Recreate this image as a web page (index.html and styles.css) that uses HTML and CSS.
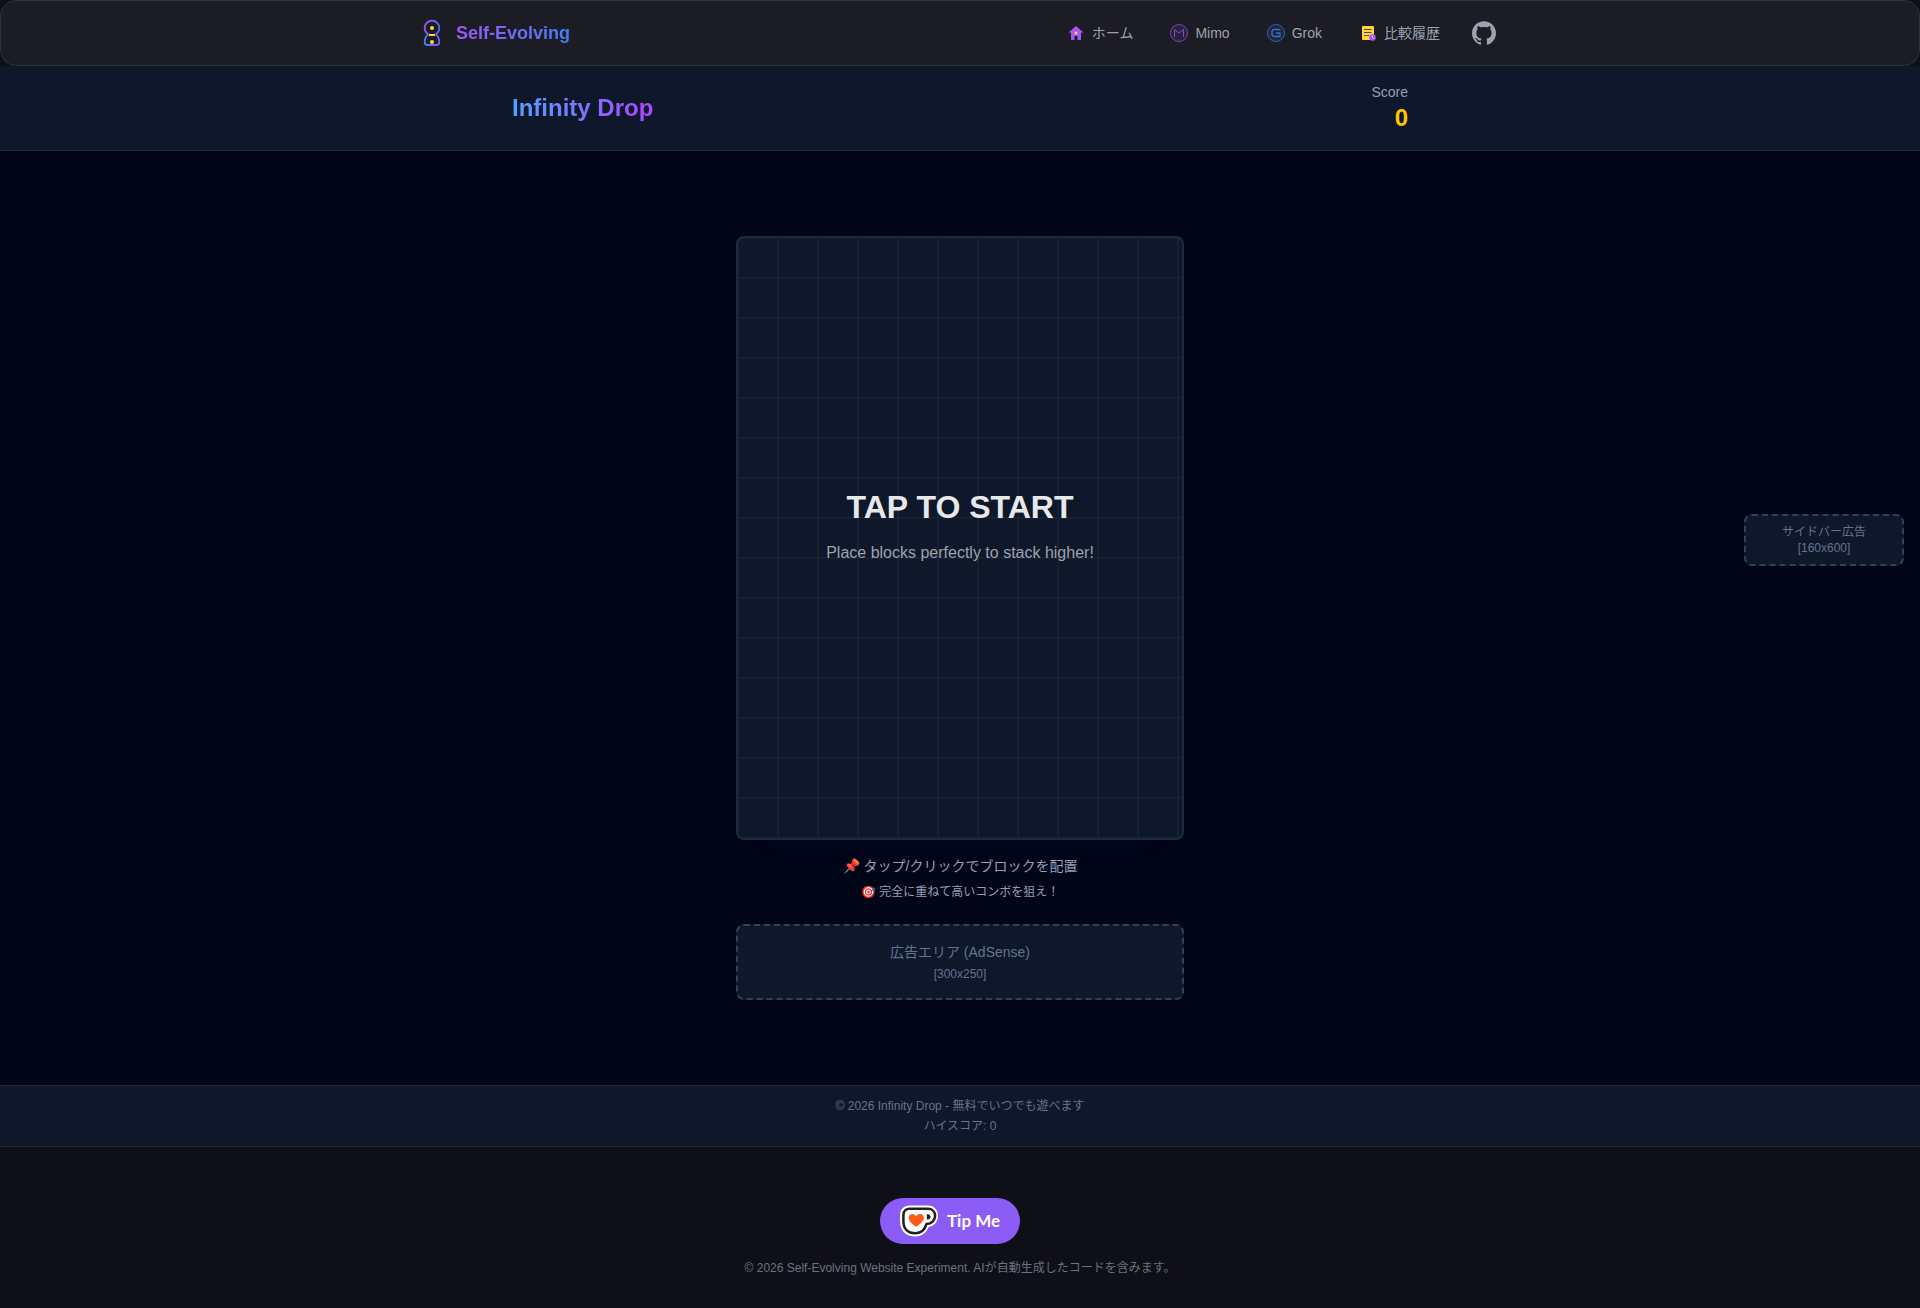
FILE: index.html
```html
<!DOCTYPE html>
<html lang="ja">
  <head>
    <meta charset="UTF-8" />
    <meta name="viewport" content="width=device-width, initial-scale=1.0" />
    <title>Infinity Drop</title>
    <link rel="stylesheet" href="styles.css">
  </head>
  <body>
    <header class="site-header">
      <div class="site-nav">
        <a class="brand" href="#">
          <svg class="brand-icon" viewBox="0 0 32 32" fill="none">
            <defs>
              <linearGradient id="top" x1="8" y1="6" x2="24" y2="14" gradientUnits="userSpaceOnUse">
                <stop offset="0" stop-color="#a855f7" />
                <stop offset="1" stop-color="#4f6ef7" />
              </linearGradient>
              <linearGradient id="bottom" x1="8" y1="20" x2="24" y2="20" gradientUnits="userSpaceOnUse">
                <stop offset="0" stop-color="#3b82f6" />
                <stop offset="1" stop-color="#7c5cf6" />
              </linearGradient>
            </defs>
            <path d="M12.500 17.500C10 16 8.700 14 8.700 11a7.300 7.300 0 0 1 14.600 0c0 3-1.300 5-3.800 6.500" stroke="url(#top)" stroke-width="1.800" />
            <path d="M12.500 17.500C9.500 19 8.700 21.500 8.700 25.300q0 2.700 2.800 2.700h9q2.800 0 2.800-2.700c0-3.800-.8-6.300-3.800-7.800" stroke="url(#bottom)" stroke-width="1.800" />
            <circle cx="16" cy="11" r="2" fill="#ffd43b" />
            <circle cx="16" cy="25" r="2" fill="#ffd43b" />
            <path d="M13 18h6" stroke="#ffd43b" stroke-width="2" />
          </svg>
          <span class="brand-name">Self-Evolving</span>
        </a>
        <nav class="links">
          <a class="link" href="#">
            <svg class="link-icon" viewBox="0 0 20 20">
              <path d="M10 3 2.500 9.500H5V17h3.500v-4h3v4H15V9.500h2.500z" fill="#a855f7" />
              <circle cx="10" cy="10" r="1.500" fill="#ffd43b" />
            </svg>
            ホーム
          </a>
          <a class="link" href="#">
            <svg class="link-icon" viewBox="0 0 20 20" fill="none" stroke="#a855f7">
              <circle cx="10" cy="10" r="8.500" fill="#a855f7" fill-opacity=".1" stroke-opacity=".65" />
              <path d="M5.500 14V6.500L10 10l4.500-3.500V14" stroke-opacity=".8" />
            </svg>
            Mimo
          </a>
          <a class="link" href="#">
            <svg class="link-icon" viewBox="0 0 20 20" fill="none" stroke="#3b82f6">
              <circle cx="10" cy="10" r="8.500" fill="#3b82f6" fill-opacity=".1" stroke-opacity=".65" />
              <path d="M14.500 6.500h-6q-2.500 0-2.500 2v3q0 2 2.500 2h5.500v-3.500h-4" stroke-opacity=".8" stroke-width="1.300" />
            </svg>
            Grok
          </a>
          <a class="link" href="#">
            <svg class="link-icon" viewBox="0 0 20 20">
              <rect x="4" y="3" width="12" height="14" rx="1" fill="#ffd43b" />
              <path d="M6 6.500h7.500M6 9.500h7.500M6 12.500h5" stroke="#1c1c25" stroke-opacity=".75" />
              <circle cx="14.500" cy="14.500" r="3.300" fill="#a855f7" />
              <path d="M14.500 12.500v2l1.200 1" stroke="#fff" stroke-width=".8" fill="none" />
            </svg>
            比較履歴
          </a>
          <a class="github" href="#" aria-label="GitHub">
            <svg class="github-icon" viewBox="0 0 24 24" fill="currentColor">
              <path d="M12 .297c-6.630 0-12 5.373-12 12 0 5.303 3.438 9.800 8.205 11.385.6.113.82-.258.82-.577 0-.285-.01-1.040-.015-2.040-3.338.724-4.042-1.610-4.042-1.610C4.422 18.070 3.633 17.700 3.633 17.700c-1.087-.744.084-.729.084-.729 1.205.084 1.838 1.236 1.838 1.236 1.070 1.835 2.809 1.305 3.495.998.108-.776.417-1.305.760-1.605-2.665-.3-5.466-1.332-5.466-5.930 0-1.310.465-2.380 1.235-3.220-.135-.303-.54-1.523.105-3.176 0 0 1.005-.322 3.300 1.230.96-.267 1.980-.399 3-.405 1.020.006 2.040.138 3 .405 2.280-1.552 3.285-1.230 3.285-1.230.645 1.653.24 2.873.12 3.176.765.840 1.230 1.910 1.230 3.220 0 4.610-2.805 5.625-5.475 5.920.42.360.81 1.096.81 2.220 0 1.606-.015 2.896-.015 3.286 0 .315.210.690.825.570C20.565 22.092 24 17.592 24 12.297c0-6.627-5.373-12-12-12" />
            </svg>
          </a>
        </nav>
      </div>
    </header>

    <div class="game">
      <header class="game-header">
        <div class="game-bar">
          <h1 class="game-title">Infinity Drop</h1>
          <div class="score">
            <div class="score-label">Score</div>
            <div class="score-value">0</div>
          </div>
        </div>
      </header>

      <main class="stage">
        <div class="column">
          <div class="board">
            <h2 class="board-title">TAP TO START</h2>
            <p class="board-text">Place blocks perfectly to stack higher!</p>
          </div>
          <div class="hints">
            <p class="hint">📌 タップ/クリックでブロックを配置</p>
            <p class="hint-small">🎯 完全に重ねて高いコンボを狙え！</p>
          </div>
          <div class="ad">
            <p class="ad-name">広告エリア (AdSense)</p>
            <p class="ad-size">[300x250]</p>
          </div>
        </div>
      </main>

      <aside class="side-ad">
        <p>サイドバー広告</p>
        <p>[160x600]</p>
      </aside>

      <footer class="game-footer">
        <p>© 2026 Infinity Drop - 無料でいつでも遊べます</p>
        <p>ハイスコア: 0</p>
      </footer>
    </div>

    <footer class="site-footer">
      <a class="tip" href="#">
        <svg class="tip-cup" viewBox="0 0 40 32">
          <path d="M10 0h19c6 0 10 4.500 10 10.500 0 6-4 10.500-9.500 11.500C27 28 22.500 32 16 32 6 32 0 26 0 16V10C0 4 4 0 10 0z" fill="#fff" />
          <path d="M10 3.500h18.500c4.500 0 7.500 3 7.500 7.200 0 4.800-3.500 8.300-8.800 8.300C25.500 25 22 28.500 16 28.500 8 28.500 3.500 24 3.500 16V10c0-4 2.500-6.500 6.500-6.500z" fill="#fff" stroke="#202020" stroke-width="2.600" />
          <path d="M27.500 9h.8c2 0 3 1 3 2.700s-1.200 2.800-3 2.800h-.8z" fill="#202020" />
          <path d="M16.500 22C12 19 9 16 9 12.700 9 8.500 14 7.500 16.500 11 19 7.500 24.500 8.500 24.500 12.700c0 3.300-3.500 6.300-8 9.300z" fill="#ff5a16" />
        </svg>
        Tip Me
      </a>
      <p class="copyright">© 2026 Self-Evolving Website Experiment. AIが自動生成したコードを含みます。</p>
    </footer>
  </body>
</html>
```

FILE: styles.css
```css
* {
  box-sizing: border-box;
}
body {
  margin: 0;
  background: #0f0f17;
  color: #e8e8ed;
  font-family: "Liberation Sans", "Noto Sans CJK JP", sans-serif;
  font-size: 16px;
  line-height: 24px;
}
h1,
h2,
p {
  margin: 0;
}
a {
  color: inherit;
  text-decoration: none;
}
svg {
  display: block;
}

/* site header */
.site-header {
  background: #1c1c25;
  border: 1px solid #30303a;
  border-radius: 16px;
}
.site-nav {
  max-width: 1152px;
  height: 64px;
  margin: 0 auto;
  padding: 0 32px;
  display: flex;
  align-items: center;
  justify-content: space-between;
}
.brand {
  display: flex;
  align-items: center;
  gap: 8px;
}
.brand-icon {
  width: 32px;
  height: 32px;
}
.brand-name {
  font-size: 18px;
  line-height: 28px;
  font-weight: bold;
  background: linear-gradient(135deg, #a855f7, #3b82f6);
  background-clip: text;
  color: transparent;
}
.links {
  display: flex;
  align-items: center;
  gap: 12px;
  color: #9ca3af;
}
.link {
  display: flex;
  align-items: center;
  gap: 6px;
  padding: 8px 12px;
  font-size: 14px;
  line-height: 20px;
}
.link-icon {
  width: 20px;
  height: 20px;
}
.github {
  padding: 8px;
}
.github-icon {
  width: 24px;
  height: 24px;
}

/* game */
.game {
  position: relative;
  background: #020618;
}
.game-header {
  padding: 16px;
  background: #0f172b;
  border-bottom: 1px solid #1d293d;
}
.game-bar {
  max-width: 896px;
  margin: 0 auto;
  display: flex;
  align-items: center;
  justify-content: space-between;
}
.game-title {
  font-size: 24px;
  line-height: 32px;
  background: linear-gradient(to right, #51a2ff, #ad46ff);
  background-clip: text;
  color: transparent;
}
.score {
  text-align: right;
}
.score-label {
  color: #90a1b9;
  font-size: 14px;
  line-height: 20px;
}
.score-value {
  color: #fdc700;
  font-size: 24px;
  line-height: 32px;
  font-weight: bold;
}
.stage {
  padding: 85px 16px;
}
.column {
  max-width: 448px;
  margin: 0 auto;
}
.board {
  height: 604px;
  padding-bottom: 24px;
  display: flex;
  flex-direction: column;
  align-items: center;
  justify-content: center;
  gap: 14px;
  background-color: #0f172b;
  background-image:
    linear-gradient(to right, #162032 2px, transparent 2px),
    linear-gradient(to bottom, #162032 2px, transparent 2px);
  background-size: 40px 40px;
  background-position: -1px -1px;
  border: 2px solid #1d293d;
  border-radius: 8px;
  box-shadow: 0 25px 50px -12px rgba(0, 4, 32, 0.5);
}
.board-title {
  color: #e7e8ea;
  font-size: 32px;
  line-height: 40px;
}
.board-text {
  color: #9fa2aa;
}
.hints {
  padding: 16px 0 24px;
  color: #90a1b9;
  text-align: center;
}
.hint {
  margin-bottom: 8px;
  font-size: 14px;
  line-height: 20px;
}
.hint-small {
  font-size: 12px;
  line-height: 16px;
}
.ad,
.side-ad {
  background: #0f172b;
  border: 2px dashed #314158;
  border-radius: 8px;
  color: #62748e;
  font-size: 12px;
  line-height: 16px;
  text-align: center;
}
.ad {
  padding: 16px;
}
.ad-name {
  margin-bottom: 4px;
  font-size: 14px;
  line-height: 20px;
}
.side-ad {
  position: absolute;
  top: 448px;
  right: 16px;
  width: 160px;
  padding: 8px;
}
.game-footer {
  padding: 12px 16px;
  display: grid;
  gap: 4px;
  background: #0f172b;
  border-top: 1px solid #1d293d;
  color: #62748e;
  font-size: 12px;
  line-height: 16px;
  text-align: center;
}

/* site footer */
.site-footer {
  padding: 51px 16px 32px;
  display: flex;
  flex-direction: column;
  align-items: center;
  gap: 16px;
  border-top: 1px solid #26262f;
}
.tip {
  height: 46px;
  margin-right: 20px;
  padding: 0 20px;
  display: flex;
  align-items: center;
  gap: 8px;
  background: #8b5cf6;
  border-radius: 23px;
  color: #fff;
  font-family: Lato, "Open Sans", sans-serif;
  font-size: 17px;
  font-weight: bold;
}
.tip-cup {
  width: 39px;
  height: 32px;
}
.copyright {
  color: #6b7280;
  font-size: 12px;
  line-height: 16px;
}
```
